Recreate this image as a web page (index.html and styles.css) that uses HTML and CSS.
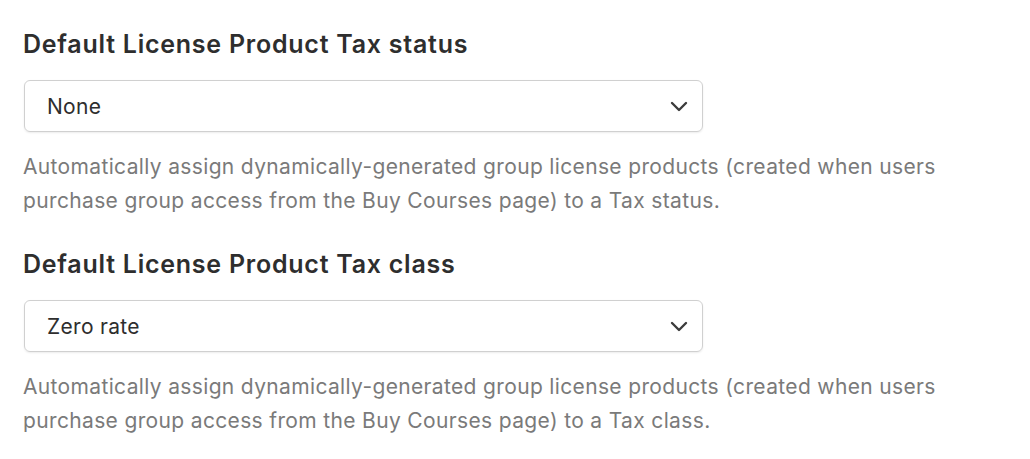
FILE: index.html
```html
<!DOCTYPE html>
<html lang="en">
<head>
    <meta charset="UTF-8">
    <title>License settings</title>
    <link rel="stylesheet" href="styles.css">
</head>
<body>
    <div class="settings">
        <div class="field">
            <h2 class="field-title">Default License Product Tax status</h2>
            <div class="select-box">
                <span class="select-value">None</span>
                <svg class="chevron" width="18" height="11" viewBox="0 0 18 11"><path d="M2 2 L9 9 L16 2" fill="none" stroke="#3c3c3c" stroke-width="2.4" stroke-linecap="round" stroke-linejoin="round"/></svg>
            </div>
            <p class="field-help">Automatically assign dynamically-generated group license products (created when users purchase group access from the Buy Courses page) to a Tax status.</p>
        </div>
        <div class="field">
            <h2 class="field-title">Default License Product Tax class</h2>
            <div class="select-box">
                <span class="select-value">Zero rate</span>
                <svg class="chevron" width="18" height="11" viewBox="0 0 18 11"><path d="M2 2 L9 9 L16 2" fill="none" stroke="#3c3c3c" stroke-width="2.4" stroke-linecap="round" stroke-linejoin="round"/></svg>
            </div>
            <p class="field-help">Automatically assign dynamically-generated group license products (created when users purchase group access from the Buy Courses page) to a Tax class.</p>
        </div>
    </div>
</body>
</html>
```

FILE: styles.css
```css
body {
    margin: 0;
    padding: 0;
    background-color: #ffffff;
    font-family: Inter, "Noto Sans", sans-serif;
}

.settings {
    padding: 28px 0 0 23px;
    width: 960px;
}

.field {
    margin-bottom: 30px;
}

.field-title {
    margin: 0;
    font-size: 25px;
    font-weight: 600;
    letter-spacing: 0.75px;
    color: #2e2e2e;
    line-height: 32px;
}

.select-box {
    margin-top: 20px;
    margin-left: 1px;
    width: 679px;
    height: 52px;
    border: 1px solid #d0d0d0;
    border-radius: 6px;
    box-shadow: 0 1px 2px rgba(0, 0, 0, 0.08);
    display: flex;
    align-items: center;
    justify-content: space-between;
    padding: 0 14px 0 22px;
    box-sizing: border-box;
}

.select-value {
    font-size: 21px;
    letter-spacing: 0.3px;
    color: #2e2e2e;
}

.field-help {
    margin: 18px 0 0 0;
    font-size: 21px;
    letter-spacing: 0.35px;
    line-height: 34px;
    color: #7a7a7a;
}
```
